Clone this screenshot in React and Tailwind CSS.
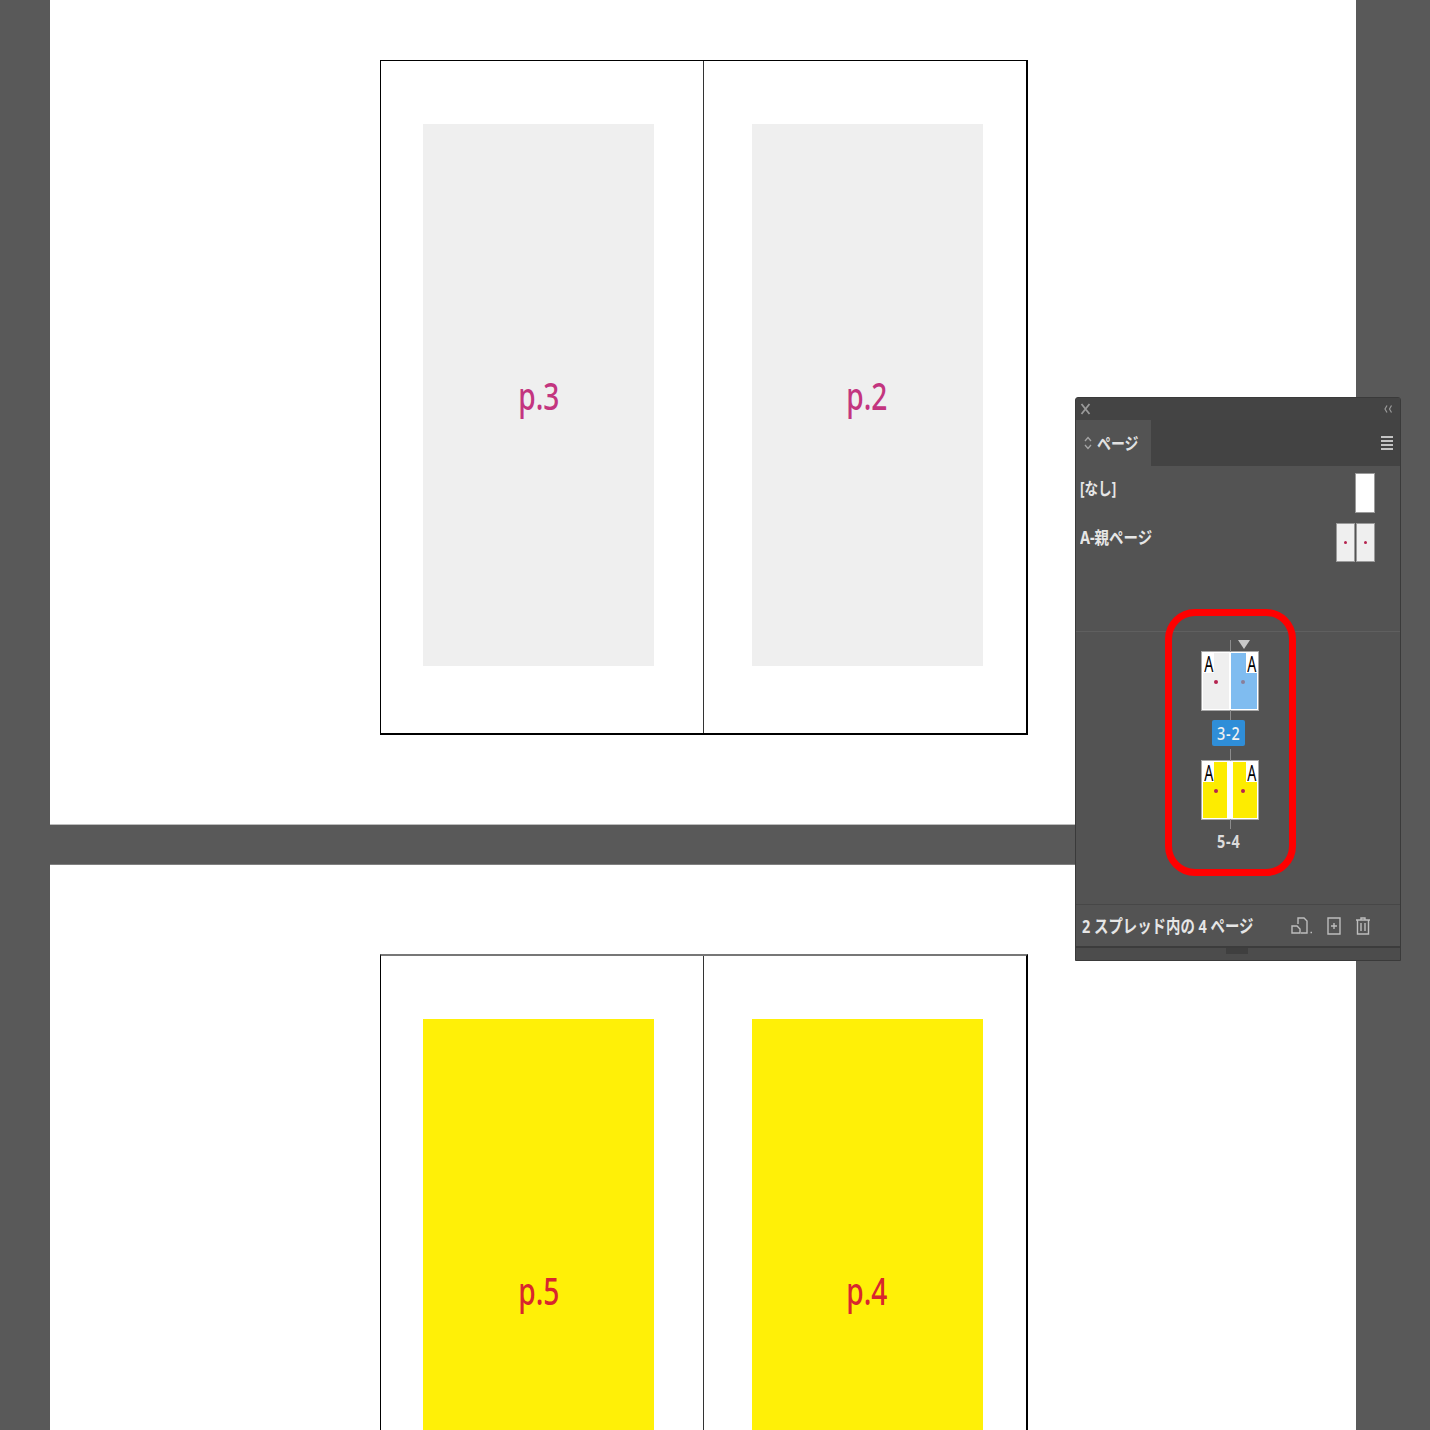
const sans = "font-['Noto_Sans','Noto_Sans_CJK_JP',sans-serif]";

const BookPage = ({ fill, label, tone, side }) => (
  <div
    className={`flex-1 h-full flex ${side === 'left' ? 'pl-[42px] pr-[49px]' : 'pl-[48px] pr-[43px]'} pt-[63px] pb-[67px]`}
  >
    <div className={`flex-1 flex items-center justify-center pb-[1px] ${side === 'left' ? '' : 'pr-[1px]'} ${fill}`}>
      <span className={`${sans} text-[38px] leading-none font-medium scale-x-[.74] ${tone}`}>{label}</span>
    </div>
  </div>
);

const BookSpread = ({ left, right, fill, tone, cut }) => (
  <div
    className={`relative w-[648px] shrink-0 flex border-l border-black border-r-[2px] border-r-black ${
      cut ? 'h-[675px] border-t-[2px] border-t-[#777]' : 'h-[675px] border-t border-t-black border-b-[2px] border-b-black'
    }`}
  >
    <BookPage fill={fill} label={left} tone={tone} side="left" />
    <div className="w-px bg-[#333]" />
    <BookPage fill={fill} label={right} tone={tone} side="right" />
  </div>
);

const ThumbPage = ({ fill, side, gap, dot }) => {
  const isLeft = side === 'left';
  const pad = !gap ? 'px-px' : isLeft ? 'pl-px pr-[3px]' : 'pl-[3px] pr-px';
  return (
    <div className={`relative w-[29px] h-full bg-white ${pad} py-px`}>
      <div className={`w-full h-full ${fill}`} />
      <div className={`absolute top-0 ${isLeft ? 'left-0' : 'right-0'} w-[12px] h-[21px] bg-white`} />
      <span
        className={`absolute top-[1px] ${isLeft ? 'left-[0px]' : 'right-[0px]'} ${sans} text-[21px] leading-[22px] text-black scale-x-[.68]`}
      >
        A
      </span>
      <div
        className={`absolute top-[28px] ${isLeft ? 'left-[12px]' : 'right-[13px]'} w-[4px] h-[4px] rounded-full ${dot}`}
      />
    </div>
  );
};

const ThumbSpread = ({ leftFill, rightFill, gap, rightDot }) => (
  <div className="relative flex w-[58px] h-[60px] border border-[#a8a8a8]">
    <ThumbPage fill={leftFill} side="left" gap={gap} dot="bg-[#b5234f]" />
    <ThumbPage fill={rightFill} side="right" gap={gap} dot={rightDot} />
    <div className="absolute left-[28px] top-[-12px] h-[12px] w-px bg-[#8c8c8c]" />
    <div className="absolute left-[28px] bottom-[-10px] h-[10px] w-px bg-[#8c8c8c]" />
  </div>
);

const MasterThumb = () => (
  <div className="w-[19px] h-full bg-[#efefef] border border-[#9a9a9a] flex items-center justify-center">
    <div className="w-[3px] h-[3px] rounded-full bg-[#b5234f]" />
  </div>
);

export default function App() {
  return (
    <div className="relative w-[1430px] h-[1430px] overflow-hidden bg-[#595959] pl-[50px] pr-[74px]">
      <div className="flex flex-col h-full">
        <div className="h-[825px] shrink-0 bg-white border-b border-b-[#bdbdbd] pt-[60px] pl-[330px]">
          <BookSpread left="p.3" right="p.2" fill="bg-[#efefef]" tone="text-[#c3357f]" />
        </div>
        <div className="h-[40px] shrink-0 bg-[#595959] border-b border-b-[#808080]" />
        <div className="flex-1 min-h-0 overflow-hidden bg-white pt-[89px] pl-[330px]">
          <BookSpread left="p.5" right="p.4" fill="bg-[#fff007]" tone="text-[#d8262e]" cut />
        </div>
      </div>

      {/* ページパネル */}
      <div className={`absolute left-[1075px] top-[397px] w-[326px] h-[564px] flex flex-col bg-[#535353] border border-[#3a3a3a] rounded-t-[3px] ${sans}`}>
        <div className="h-[22px] bg-[#444444] flex items-center justify-between pl-[4px] pr-[7px] text-[#9a9a9a]">
          <svg width="11" height="12" viewBox="0 0 11 12" stroke="currentColor" strokeWidth="1.8" fill="none">
            <path d="M1.500 1 9.500 11M9.500 1 1.500 11" />
          </svg>
          <svg width="10" height="8" viewBox="0 0 10 8" stroke="currentColor" strokeWidth="1.200" fill="none">
            <path d="M4 .5 2 4l2 3.500M8.500 .5 6.500 4l2 3.500" />
          </svg>
        </div>
        <div className="h-[46px] bg-[#434343] flex items-stretch justify-between">
          <div className="w-[75px] bg-[#535353] flex items-center pl-[8px] gap-[5px] text-[#e2e2e2]">
            <svg width="8" height="14" viewBox="0 0 8 14" stroke="#a5a5a5" strokeWidth="1.300" fill="none">
              <path d="M1 5 4 1.500 7 5M1 9l3 3.500L7 9" />
            </svg>
            <span className="text-[17px] leading-none font-bold whitespace-nowrap origin-left scale-x-[.82]">ページ</span>
          </div>
          <div className="flex flex-col justify-center gap-[2px] pr-[7px]">
            <div className="w-[12px] h-[2px] bg-[#c4c4c4]" />
            <div className="w-[12px] h-[2px] bg-[#c4c4c4]" />
            <div className="w-[12px] h-[2px] bg-[#c4c4c4]" />
            <div className="w-[12px] h-[2px] bg-[#c4c4c4]" />
          </div>
        </div>
        <div className="h-[166px] shrink-0 border-b border-b-[#5f5f5f] pt-[7px] pl-[4px] pr-[25px] text-[#e6e6e6]">
          <div className="h-[40px] flex justify-between">
            <span className="text-[17px] leading-[32px] font-bold whitespace-nowrap origin-left scale-x-[.8]">[なし]</span>
            <div className="w-[20px] h-full bg-white border border-[#9a9a9a]" />
          </div>
          <div className="h-[39px] mt-[10px] flex justify-between">
            <span className="text-[17px] leading-[30px] font-bold whitespace-nowrap origin-left scale-x-[.85]">A-親ページ</span>
            <div className="flex gap-[1px] h-full">
              <MasterThumb />
              <MasterThumb />
            </div>
          </div>
        </div>
        <div className="h-[273px] shrink-0 border-b border-b-[#474747] pl-[125px] pt-[19px]">
          <div className="w-[60px] flex flex-col">
            <div className="relative">
              <ThumbSpread leftFill="bg-[#efefef]" rightFill="bg-[#7fbcf0]" rightDot="bg-[#8a7f9a]" />
              <div className="absolute left-[37px] top-[-11px] w-0 h-0 border-x-[6px] border-x-transparent border-t-[9px] border-t-[#c8c8c8]" />
            </div>
            <div className="mt-[9px] ml-[11px] w-[33px] h-[26px] bg-[#2f8ed8] flex items-center justify-center rounded-[2px]">
              <span className="text-[18px] leading-none font-medium tracking-[1px] text-[#f2f2f2] scale-x-[.8] whitespace-nowrap">3-2</span>
            </div>
            <div className="mt-[14px]">
              <ThumbSpread leftFill="bg-[#fdec00]" rightFill="bg-[#fdec00]" gap rightDot="bg-[#b5234f]" />
            </div>
            <div className="mt-[8px] ml-[11px] w-[33px] h-[26px] flex items-center justify-center">
              <span className="text-[18px] leading-none font-bold tracking-[1px] text-[#dcdcdc] scale-x-[.8] whitespace-nowrap">5-4</span>
            </div>
          </div>
        </div>
        <div className="h-[43px] shrink-0 flex items-center pl-[6px] text-[#e6e6e6] border-b-[2px] border-b-[#3c3c3c]">
          <span className="w-[209px] shrink-0 text-[18px] leading-none font-bold whitespace-nowrap origin-left scale-x-[.8]">
            2 スプレッド内の 4 ページ
          </span>
          <div className="flex items-center gap-[14px] text-[#bdbdbd]">
            <svg width="22" height="18" viewBox="0 0 22 18" stroke="currentColor" strokeWidth="1.400" fill="none">
              <path d="M7 7V1h6l3 3v12h-6" />
              <path d="M1 9h5l3 3v4H1z" />
              <path d="M19.500 15.500h1.500" />
            </svg>
            <svg width="14" height="18" viewBox="0 0 14 18" stroke="currentColor" strokeWidth="1.400" fill="none">
              <path d="M1 1h12v16H1zM7 6v6M4 9h6" />
            </svg>
            <svg width="16" height="18" viewBox="0 0 16 18" stroke="currentColor" strokeWidth="1.400" fill="none">
              <path d="M1 3h14M6 3V1h4v2M2.500 3v14h11V3M6 6v8M10 6v8" />
            </svg>
          </div>
        </div>
        <div className="flex-1 bg-[#4c4c4c] flex justify-center pr-[2px]">
          <div className="w-[22px] h-[6px] bg-[#3f3f3f]" />
        </div>
        <div className="absolute left-[89px] top-[211px] w-[131px] h-[267px] border-[7px] border-[#ff0000] rounded-[30px]" />
      </div>
    </div>
  );
}
